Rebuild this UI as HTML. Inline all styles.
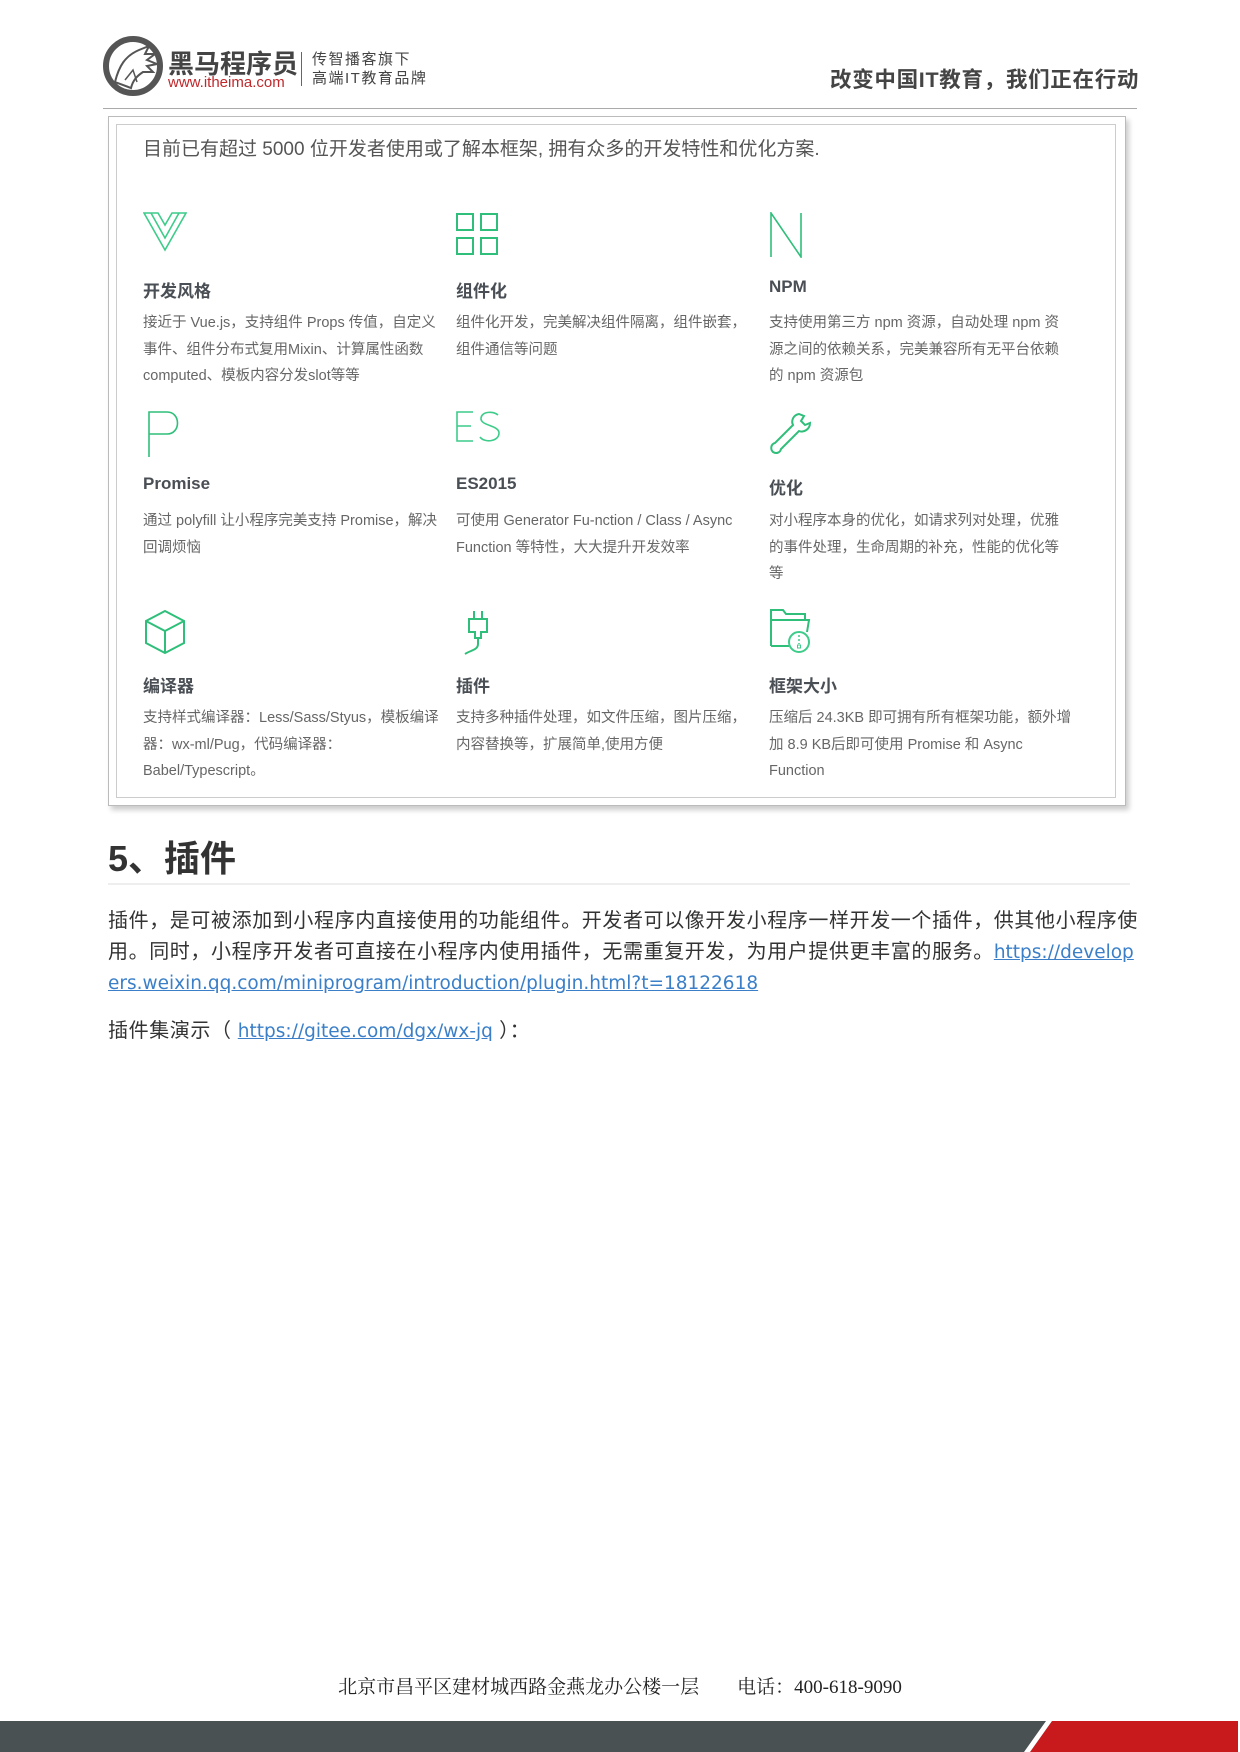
<!DOCTYPE html>
<html><head><meta charset="utf-8"><style>
*{margin:0;padding:0;box-sizing:border-box}
body{width:1240px;height:1752px;background:#fff;position:relative;overflow:hidden;font-family:"Liberation Sans","Noto Sans CJK SC",sans-serif}
.abs{position:absolute}
.card .t{position:absolute;font-size:17px;font-weight:bold;color:#4a4f55}
.card .d{position:absolute;font-size:14.5px;color:#666;line-height:26.5px;white-space:nowrap}
.ic{position:absolute}
p.b{font-size:20px;color:#333;line-height:31px;white-space:nowrap;letter-spacing:0.6px}
a{color:#3a7fc8;font-family:"DejaVu Sans",sans-serif;font-size:18.5px;letter-spacing:0}
</style></head><body>
<!-- header -->
<svg class="abs" style="left:103px;top:36px" width="62" height="60" viewBox="0 0 62 60">
<circle cx="30" cy="30" r="27" fill="none" stroke="#555" stroke-width="6"/>
<path d="M12 46 C16 30 22 20 36 14 L46 10 L42 18 L52 18 L44 24 L54 28 L44 30 L50 36 L40 36 C34 40 30 44 28 52 Z" fill="#fff" stroke="#555" stroke-width="2"/>
<path d="M22 44 L30 34 L34 46" fill="none" stroke="#555" stroke-width="1.5"/>
</svg>
<div class="abs" style="left:168px;top:44px;font-size:26px;font-weight:bold;color:#444;letter-spacing:0px">黑马程序员</div>
<div class="abs" style="left:168px;top:74px;font-size:15px;color:#c0282c">www.itheima.com</div>
<div class="abs" style="left:301px;top:52px;width:1px;height:34px;background:#666"></div>
<div class="abs" style="left:312px;top:50px;font-size:15px;color:#444;letter-spacing:1.5px;line-height:19px">传智播客旗下<br>高端IT教育品牌</div>
<div class="abs" style="left:830px;top:63px;font-size:21.5px;font-weight:bold;color:#444;letter-spacing:0.7px">改变中国IT教育，我们正在行动</div>
<div class="abs" style="left:103px;top:108px;width:1034px;height:1px;background:#aaa"></div>

<!-- card -->
<div class="abs" style="left:108px;top:116px;width:1018px;height:690px;border:1px solid #bbb;box-shadow:3px 4px 5px #ccc"></div>
<div class="abs" style="left:116px;top:124px;width:1000px;height:674px;border:1px solid #ccc"></div>
<div class="card">
<div class="abs" style="left:143px;top:134px;font-size:19px;color:#555;white-space:nowrap">目前已有超过 5000 位开发者使用或了解本框架, 拥有众多的开发特性和优化方案.</div>

<svg class="ic" style="left:143px;top:212px" width="44" height="40" viewBox="0 0 44 40"><path d="M1 1 L15 1 L22 13 L29 1 L43 1 L22 38 Z M8 1 L22 26 L36 1" fill="none" stroke="#3dcc8a" stroke-width="1.6"/></svg>
<svg class="ic" style="left:456px;top:213px" width="44" height="44" viewBox="0 0 44 44"><g fill="none" stroke="#2fbf7a" stroke-width="2"><rect x="1" y="1" width="16" height="16"/><rect x="25" y="1" width="16" height="16"/><rect x="1" y="25" width="16" height="16"/><rect x="25" y="25" width="16" height="16"/></g></svg>
<svg class="ic" style="left:769px;top:212px" width="34" height="46" viewBox="0 0 34 46"><path d="M2 45 L2 1 L32 45 L32 1" fill="none" stroke="#2fbf7a" stroke-width="1.6"/></svg>
<div class="t" style="left:143px;top:277px">开发风格</div>
<div class="t" style="left:456px;top:277px">组件化</div>
<div class="t" style="left:769px;top:277px">NPM</div>
<div class="d" style="left:143px;top:310px">接近于 Vue.js，支持组件 Props 传值，自定义<br>事件、组件分布式复用Mixin、计算属性函数<br>computed、模板内容分发slot等等</div>
<div class="d" style="left:456px;top:310px">组件化开发，完美解决组件隔离，组件嵌套，<br>组件通信等问题</div>
<div class="d" style="left:769px;top:310px">支持使用第三方 npm 资源，自动处理 npm 资<br>源之间的依赖关系，完美兼容所有无平台依赖<br>的 npm 资源包</div>

<svg class="ic" style="left:147px;top:410px" width="36" height="48" viewBox="0 0 36 48"><path d="M2 47 L2 2 L20 2 C34 2 34 24 20 24 L2 24" fill="none" stroke="#2fbf7a" stroke-width="1.6"/></svg>
<svg class="ic" style="left:456px;top:411px" width="46" height="32" viewBox="0 0 46 32"><path d="M17 1 L1 1 L1 30 L17 30 M1 15 L15 15 M42 4 C38 0 26 0 25 7 C24 15 43 14 43 22 C43 31 28 32 24 26" fill="none" stroke="#3dcc8a" stroke-width="1.6"/></svg>
<svg class="ic" style="left:769px;top:411px" width="44" height="44" viewBox="0 0 44 44"><path d="M30 3 C24 4 22 10 24 14 L6 32 C2 33 1 38 4 41 C7 43 11 42 12 38 L30 20 C35 22 41 18 41 12 L36 14 L32 10 L35 5 Z" fill="none" stroke="#2fbf7a" stroke-width="2"/></svg>
<div class="t" style="left:143px;top:474px">Promise</div>
<div class="t" style="left:456px;top:474px">ES2015</div>
<div class="t" style="left:769px;top:474px">优化</div>
<div class="d" style="left:143px;top:508px">通过 polyfill 让小程序完美支持 Promise，解决<br>回调烦恼</div>
<div class="d" style="left:456px;top:508px">可使用 Generator Fu-nction / Class / Async<br>Function 等特性，大大提升开发效率</div>
<div class="d" style="left:769px;top:508px">对小程序本身的优化，如请求列对处理，优雅<br>的事件处理，生命周期的补充，性能的优化等<br>等</div>

<svg class="ic" style="left:144px;top:609px" width="42" height="46" viewBox="0 0 42 46"><path d="M21 2 L40 12 L40 34 L21 44 L2 34 L2 12 Z M2 12 L21 22 L40 12 M21 22 L21 44" fill="none" stroke="#2fbf7a" stroke-width="2"/></svg>
<svg class="ic" style="left:463px;top:610px" width="32" height="46" viewBox="0 0 32 46"><path d="M11 1 L11 9 M19 1 L19 9 M6 9 L24 9 L24 22 L18 22 L18 28 L12 28 L12 22 L6 22 Z M15 28 L15 34 C15 40 8 40 2 44" fill="none" stroke="#2fbf7a" stroke-width="2"/></svg>
<svg class="ic" style="left:769px;top:608px" width="44" height="46" viewBox="0 0 44 46"><path d="M2 38 L2 2 L14 2 L17 6 L36 6 L36 12 M2 12 L40 12 L38 24 M2 38 L20 38" fill="none" stroke="#2fbf7a" stroke-width="2"/><circle cx="30" cy="34" r="10" fill="#fff" stroke="#3dcc8a" stroke-width="2"/><path d="M30 27 L30 36" stroke="#3dcc8a" stroke-width="1.5" stroke-dasharray="2 2"/><rect x="28.5" y="37" width="3" height="3" fill="none" stroke="#3dcc8a"/></svg>
<div class="t" style="left:143px;top:672px">编译器</div>
<div class="t" style="left:456px;top:672px">插件</div>
<div class="t" style="left:769px;top:672px">框架大小</div>
<div class="d" style="left:143px;top:705px">支持样式编译器：Less/Sass/Styus，模板编译<br>器：wx-ml/Pug，代码编译器：<br>Babel/Typescript。</div>
<div class="d" style="left:456px;top:705px">支持多种插件处理，如文件压缩，图片压缩，<br>内容替换等，扩展简单,使用方便</div>
<div class="d" style="left:769px;top:705px">压缩后 24.3KB 即可拥有所有框架功能，额外增<br>加 8.9 KB后即可使用 Promise 和 Async<br>Function</div>
</div>

<!-- section -->
<div class="abs" style="left:108px;top:830px;font-size:36px;font-weight:bold;color:#333">5、插件</div>
<div class="abs" style="left:108px;top:883px;width:1022px;height:2px;background:#eee"></div>
<p class="b abs" style="left:108px;top:906px">插件，是可被添加到小程序内直接使用的功能组件。开发者可以像开发小程序一样开发一个插件，供其他小程序使<br>用。同时，小程序开发者可直接在小程序内使用插件，无需重复开发，为用户提供更丰富的服务。<a href="#">https://develop</a><br><a href="#">ers.weixin.qq.com/miniprogram/introduction/plugin.html?t=18122618</a></p>
<p class="b abs" style="left:108px;top:1016px">插件集演示（ <a href="#">https://gitee.com/dgx/wx-jq</a> ）：</p>

<!-- footer -->
<div class="abs" style="left:0;width:1240px;top:1672px;text-align:center;font-family:'Liberation Serif','Noto Serif CJK SC',serif;font-size:19px;color:#222">北京市昌平区建材城西路金燕龙办公楼一层&nbsp;&nbsp;&nbsp;&nbsp;&nbsp;&nbsp;&nbsp;&nbsp;电话：400-618-9090</div>
<svg class="abs" style="left:0;top:1721px" width="1240" height="31"><rect width="1240" height="31" fill="#4a5152"/><polygon points="1052,0 1240,0 1240,31 1030,31" fill="#c8191c"/><polygon points="1046,0 1052,0 1030,31 1024,31" fill="#fff"/><rect x="1238" width="2" height="31" fill="#fff"/></svg>
</body></html>
